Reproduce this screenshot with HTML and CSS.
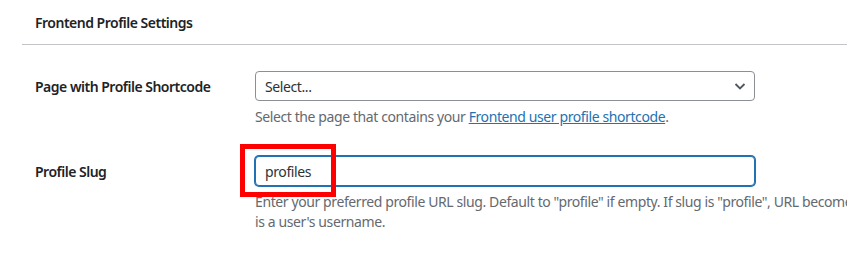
FILE: index.html
```html
<!DOCTYPE html>
<html lang="en">
<head>
    <meta charset="UTF-8">
    <meta name="viewport" content="width=device-width, initial-scale=1.0">
    <title>Frontend Profile Settings</title>
    <link rel="stylesheet" href="styles.css">
</head>
<body>
    <div class="section-head">
        <h2 class="section-title">Frontend Profile Settings</h2>
    </div>

    <div class="form-table">
        <div class="form-row">
            <div class="form-label">Page with Profile Shortcode</div>
            <div class="form-field">
                <div class="select-box">
                    <span class="select-value">Select...</span>
                    <svg class="chevron" width="16" height="16" viewBox="0 0 16 16">
                        <polyline points="3.5,6 8,10.5 12.5,6" fill="none" stroke="#50575e" stroke-width="1.8"/>
                    </svg>
                </div>
                <p class="description">Select the page that contains your <a href="#">Frontend user profile shortcode</a>.</p>
            </div>
        </div>

        <div class="form-row">
            <div class="form-label">Profile Slug</div>
            <div class="form-field">
                <div class="input-wrap">
                    <input type="text" class="text-input" value="profiles">
                    <!-- highlight box from the annotated screenshot -->
                    <span class="highlight"></span>
                </div>
                <p class="description nowrap">Enter your preferred profile URL slug. Default to "profile" if empty. If slug is "profile", URL becomes /profile/username where username<br>is a user's username.</p>
            </div>
        </div>
    </div>
</body>
</html>
```

FILE: styles.css
```css
body {
    margin: 0;
    padding: 0;
    background-color: #ffffff;
    color: #1d2327;
    font-family: 'Noto Sans', 'Open Sans', sans-serif;
    font-size: 14px;
    letter-spacing: -0.4px;
    overflow: hidden;
}
.section-head {
    margin-left: 22px;
    height: 44px;
    border-bottom: 1px solid #c3c4c7;
    display: flex;
    align-items: center;
}
.section-title {
    margin: 0;
    padding-left: 13px;
    font-size: 14px;
    font-weight: 600;
    letter-spacing: -0.5px;
    color: #1d2327;
}
.form-table {
    margin-top: 12px;
    padding-left: 35px;
}
.form-row {
    display: grid;
    grid-template-columns: 220px 500px;
    padding: 14px 0 15px;
}
.form-label {
    font-weight: 600;
    letter-spacing: -0.5px;
    line-height: 30px;
    padding-top: 1px;
    color: #1d2327;
}
.form-field {
    min-width: 0;
}
.select-box {
    box-sizing: border-box;
    height: 30px;
    border: 1px solid #8c8f94;
    border-radius: 4px;
    display: flex;
    align-items: center;
    justify-content: space-between;
    padding: 0 6px 0 9px;
    color: #2c3338;
}
.input-wrap {
    position: relative;
}
.text-input {
    box-sizing: border-box;
    display: block;
    width: 500px;
    height: 30px;
    margin: 0;
    padding: 0 9px;
    border: 1px solid #2271b1;
    box-shadow: 0 0 0 1px #2271b1;
    border-radius: 4px;
    outline: none;
    font-family: inherit;
    font-size: 14px;
    letter-spacing: -0.4px;
    color: #2c3338;
    background: #fff;
}
.highlight {
    position: absolute;
    left: -15px;
    top: -12px;
    width: 96px;
    height: 53px;
    box-sizing: border-box;
    border: 5px solid #ff0000;
    pointer-events: none;
}
.description {
    margin: 6px 0 0;
    line-height: 20px;
    color: #646970;
}
.description a {
    color: #2271b1;
}
.nowrap {
    white-space: nowrap;
}
```
